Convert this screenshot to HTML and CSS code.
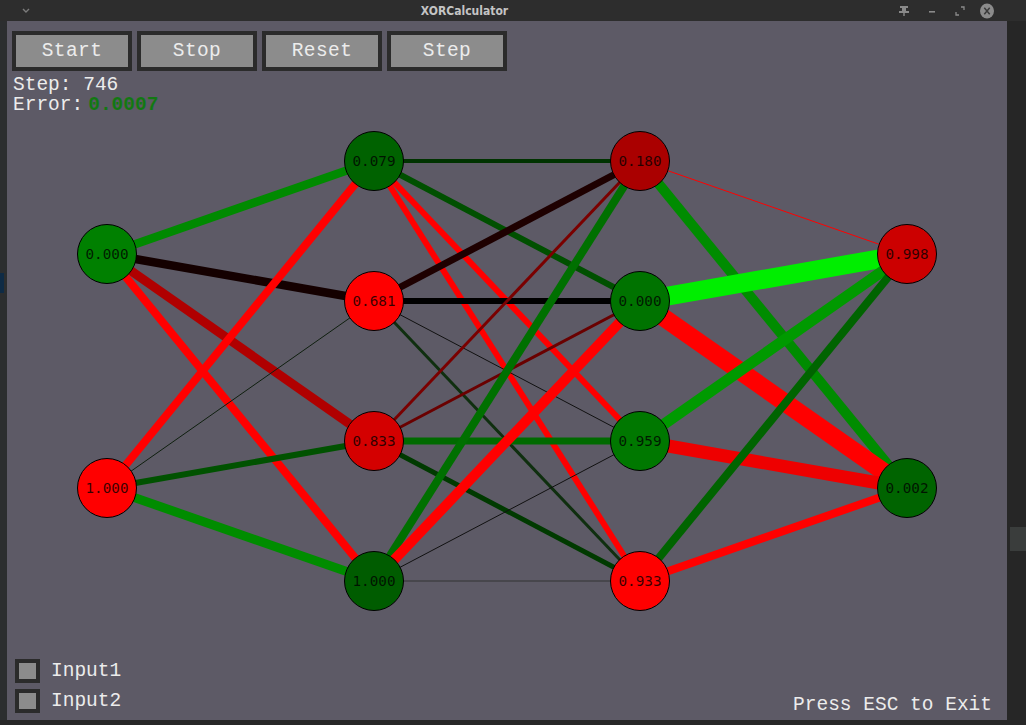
FILE: index.html
```html
<!DOCTYPE html>
<html lang="en">
<head>
<meta charset="utf-8">
<title>XORCalculator</title>
<link rel="stylesheet" href="styles.css">
</head>
<body>
<div class="screen">
  <header class="titlebar">
    <div class="tb-left">
      <svg class="tb-icon" width="10" height="8" viewBox="0 0 10 8"><polyline points="2,2 5,5 8,2" fill="none" stroke="#7c7c7c" stroke-width="1.4"/></svg>
    </div>
    <div class="tb-title">XORCalculator</div>
    <div class="tb-right">
      <svg class="tb-btn" width="12" height="12" viewBox="0 0 12 12"><rect x="2" y="1" width="8" height="2" fill="#8a8a8a"/><rect x="4" y="3" width="4" height="4" fill="#8a8a8a"/><rect x="1" y="6" width="10" height="2" fill="#8a8a8a"/><rect x="5.3" y="8" width="1.4" height="3" fill="#8a8a8a"/></svg>
      <svg class="tb-btn" width="12" height="12" viewBox="0 0 12 12"><rect x="3" y="6" width="6" height="1.6" fill="#8a8a8a"/></svg>
      <svg class="tb-btn" width="12" height="12" viewBox="0 0 12 12"><polyline points="7,2 10,2 10,5" fill="none" stroke="#8a8a8a" stroke-width="1.3"/><polyline points="2,7 2,10 5,10" fill="none" stroke="#8a8a8a" stroke-width="1.3"/></svg>
      <svg class="tb-close" width="16" height="16" viewBox="0 0 16 16"><ellipse cx="8" cy="8" rx="7" ry="7.5" fill="#8b8b8b"/><path d="M5.3 4.8 L10.7 11.2 M10.7 4.8 L5.3 11.2" stroke="#3a3a3a" stroke-width="1.5"/></svg>
    </div>
  </header>
  <div class="main">
    <div class="side-left"><span class="mark-blue"></span></div>
    <div class="canvas">
      <svg class="network" width="1000" height="699" viewBox="0 0 1000 699">
        <g class="edges" fill="none">
          <line x1="100" y1="233" x2="367" y2="140" stroke="#008a00" stroke-width="8.5"/>
          <line x1="100" y1="233" x2="367" y2="280" stroke="#140000" stroke-width="8.5"/>
          <line x1="100" y1="233" x2="367" y2="420" stroke="#b00000" stroke-width="9"/>
          <line x1="100" y1="233" x2="367" y2="560" stroke="#ff0000" stroke-width="8"/>
          <line x1="100" y1="467" x2="367" y2="140" stroke="#ff0000" stroke-width="8"/>
          <line x1="100" y1="467" x2="367" y2="280" stroke="#0f1f0f" stroke-width="1"/>
          <line x1="100" y1="467" x2="367" y2="420" stroke="#005200" stroke-width="6"/>
          <line x1="100" y1="467" x2="367" y2="560" stroke="#008c00" stroke-width="9"/>

          <line x1="367" y1="140" x2="633" y2="140" stroke="#003300" stroke-width="4"/>
          <line x1="367" y1="140" x2="633" y2="280" stroke="#005000" stroke-width="6"/>
          <line x1="367" y1="140" x2="633" y2="420" stroke="#ff0000" stroke-width="6"/>
          <line x1="367" y1="140" x2="633" y2="560" stroke="#ff0000" stroke-width="6"/>
          <line x1="367" y1="280" x2="633" y2="140" stroke="#1e0000" stroke-width="7"/>
          <line x1="367" y1="280" x2="633" y2="280" stroke="#000000" stroke-width="6"/>
          <line x1="367" y1="280" x2="633" y2="420" stroke="#111111" stroke-width="1"/>
          <line x1="367" y1="280" x2="633" y2="560" stroke="#0f2f0f" stroke-width="3"/>
          <line x1="367" y1="420" x2="633" y2="140" stroke="#7a0000" stroke-width="3"/>
          <line x1="367" y1="420" x2="633" y2="280" stroke="#6a0000" stroke-width="3"/>
          <line x1="367" y1="420" x2="633" y2="420" stroke="#006a00" stroke-width="7"/>
          <line x1="367" y1="420" x2="633" y2="560" stroke="#003a00" stroke-width="5"/>
          <line x1="367" y1="560" x2="633" y2="140" stroke="#007000" stroke-width="8"/>
          <line x1="367" y1="560" x2="633" y2="280" stroke="#ff0000" stroke-width="10"/>
          <line x1="367" y1="560" x2="633" y2="420" stroke="#111111" stroke-width="1"/>
          <line x1="367" y1="560" x2="633" y2="560" stroke="#333333" stroke-width="1"/>

          <line x1="633" y1="140" x2="900" y2="233" stroke="#ff0000" stroke-width="1"/>
          <line x1="633" y1="140" x2="900" y2="467" stroke="#008c00" stroke-width="10"/>
          <line x1="633" y1="280" x2="900" y2="233" stroke="#00ee00" stroke-width="19"/>
          <line x1="633" y1="280" x2="900" y2="467" stroke="#ff0000" stroke-width="18"/>
          <line x1="633" y1="420" x2="900" y2="233" stroke="#009a00" stroke-width="11"/>
          <line x1="633" y1="420" x2="900" y2="467" stroke="#ee0000" stroke-width="13"/>
          <line x1="633" y1="560" x2="900" y2="233" stroke="#006400" stroke-width="8"/>
          <line x1="633" y1="560" x2="900" y2="467" stroke="#ff0000" stroke-width="8"/>
        </g>
        <g class="nodes" stroke="#000" stroke-width="1">
          <circle cx="100" cy="233" r="29.5" fill="#008000"/>
          <circle cx="100" cy="467" r="29.5" fill="#ff0000"/>
          <circle cx="367" cy="140" r="29.5" fill="#006200"/>
          <circle cx="367" cy="280" r="29.5" fill="#ff0000"/>
          <circle cx="367" cy="420" r="29.5" fill="#d40000"/>
          <circle cx="367" cy="560" r="29.5" fill="#005c00"/>
          <circle cx="633" cy="140" r="29.5" fill="#aa0000"/>
          <circle cx="633" cy="280" r="29.5" fill="#007300"/>
          <circle cx="633" cy="420" r="29.5" fill="#007800"/>
          <circle cx="633" cy="560" r="29.5" fill="#ff0000"/>
          <circle cx="900" cy="233" r="29.5" fill="#cc0000"/>
          <circle cx="900" cy="467" r="29.5" fill="#006400"/>
        </g>
        <g class="labels" text-anchor="middle">
          <text x="100" y="238">0.000</text>
          <text x="100" y="472">1.000</text>
          <text x="367" y="145">0.079</text>
          <text x="367" y="285">0.681</text>
          <text x="367" y="425">0.833</text>
          <text x="367" y="565">1.000</text>
          <text x="633" y="145">0.180</text>
          <text x="633" y="285">0.000</text>
          <text x="633" y="425">0.959</text>
          <text x="633" y="565">0.933</text>
          <text x="900" y="238">0.998</text>
          <text x="900" y="472">0.002</text>
        </g>
      </svg>
      <div class="controls">
        <button class="btn">Start</button>
        <button class="btn">Stop</button>
        <button class="btn">Reset</button>
        <button class="btn">Step</button>
      </div>
      <div class="stats">
        <div class="stat">Step: 746</div>
        <div class="stat">Error:<span class="err">0.0007</span></div>
      </div>
      <div class="bottom">
        <div class="inputs">
          <label class="check"><span class="box"></span><span class="check-label">Input1</span></label>
          <label class="check"><span class="box"></span><span class="check-label">Input2</span></label>
        </div>
        <div class="hint">Press ESC to Exit</div>
      </div>
    </div>
    <div class="side-right"><span class="mark-gray"></span></div>
  </div>
</div>
</body>
</html>
```

FILE: styles.css
```css
* { box-sizing: border-box; }
html, body { margin: 0; padding: 0; }
body {
  background: #272727;
  width: 1026px;
  height: 725px;
  overflow: hidden;
  font-family: "Liberation Mono", "DejaVu Sans Mono", monospace;
}
.screen {
  width: 1026px;
  height: 725px;
  display: flex;
  flex-direction: column;
}
.titlebar {
  height: 21px;
  background: #2d2d2d;
  display: flex;
  align-items: center;
}
.tb-left {
  width: 40px;
  display: flex;
  padding-left: 21px;
  padding-top: 1px;
}
.tb-title {
  flex: 1;
  text-align: center;
  font-family: "DejaVu Sans Condensed", "DejaVu Sans", sans-serif;
  font-weight: bold;
  font-size: 12px;
  color: #c4c4c4;
  padding-right: 6px;
}
.tb-right {
  width: 131px;
  display: flex;
  align-items: center;
  gap: 16px;
  padding-left: 3px;
}
.tb-btn { display: block; }
.tb-close { display: block; margin-left: -3px; }

.main {
  display: flex;
  height: 699px;
}
.side-left {
  width: 7px;
  background: #2c2e2f;
  position: relative;
}
.mark-blue {
  position: absolute;
  left: 0;
  top: 252px;
  width: 4px;
  height: 20px;
  background: #0f2b45;
}
.side-right {
  width: 19px;
  background: #262626;
  position: relative;
}
.mark-gray {
  position: absolute;
  left: 3px;
  top: 506px;
  width: 16px;
  height: 24px;
  background: #3a3d3c;
}
.canvas {
  position: relative;
  width: 1000px;
  height: 699px;
  background: #5d5a66;
  display: flex;
  flex-direction: column;
  padding: 10px 15px 7px 5px;
}
.network {
  position: absolute;
  left: 0;
  top: 0;
}
.network text {
  font-family: "DejaVu Sans Mono", "Liberation Mono", monospace;
  font-size: 14.3px;
  fill: rgba(0, 0, 0, 0.78);
  stroke: none;
}
.controls {
  position: relative;
  display: flex;
  gap: 5px;
}
.btn {
  width: 120px;
  height: 40px;
  margin: 0;
  padding: 0;
  border: 4px solid #2b2b2b;
  background: #8c8c8c;
  color: #ececec;
  font-family: "Liberation Mono", "DejaVu Sans Mono", monospace;
  font-size: 19.5px;
  line-height: 32px;
  text-align: center;
  letter-spacing: 0.4px;
}
.stats {
  position: relative;
  margin-top: 4px;
  padding-left: 1px;
  color: #ececec;
  font-size: 19.5px;
  line-height: 20px;
}
.err {
  margin-left: 5px;
  color: #127812;
  font-weight: bold;
}
.bottom {
  position: relative;
  margin-top: auto;
  display: flex;
  justify-content: space-between;
  align-items: flex-end;
}
.inputs {
  display: flex;
  flex-direction: column;
  gap: 6px;
  padding-left: 3px;
}
.check {
  display: flex;
  align-items: center;
  gap: 11px;
  height: 24px;
}
.box {
  width: 25px;
  height: 24px;
  border: 4px solid #2b2b2b;
  background: #8c8c8c;
}
.check-label {
  color: #ececec;
  font-size: 19.5px;
  line-height: 20px;
}
.hint {
  color: #ececec;
  font-size: 19.5px;
  line-height: 20px;
  margin-bottom: -2px;
}
```
